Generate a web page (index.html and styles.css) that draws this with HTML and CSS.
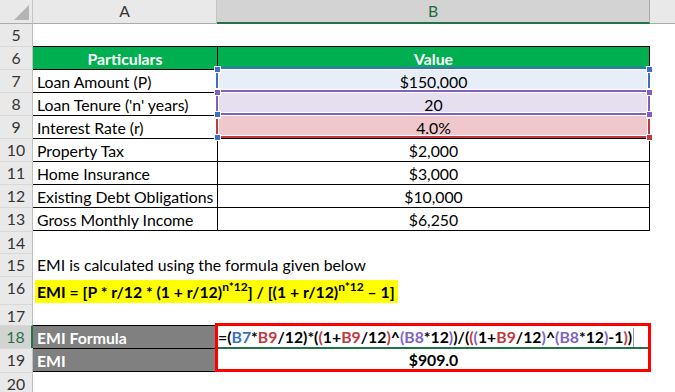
FILE: index.html
```html
<!DOCTYPE html>
<html>
<head>
<meta charset="utf-8">
<link rel="stylesheet" href="styles.css">
</head>
<body>
<div class="sheet">
  <div class="row hdr">
    <div class="corner"><span class="tri"></span></div>
    <div class="ch">A</div>
    <div class="ch sel">B</div>
    <div class="ch rest"></div>
  </div>
  <div class="row"><div class="rh">5</div><div class="c"></div><div class="c"></div><div class="c"></div></div>
  <div class="row"><div class="rh">6</div><div class="c ta th">Particulars</div><div class="c tb th ctr">Value</div><div class="c"></div></div>
  <div class="row"><div class="rh">7</div><div class="c ta">Loan Amount (P)</div><div class="c tb ctr fill-blue"><span class="range blue"><i class="h tl"></i><i class="h tr"></i><i class="h bl"></i><i class="h br"></i></span>$150,000</div><div class="c"></div></div>
  <div class="row"><div class="rh">8</div><div class="c ta">Loan Tenure ('n' years)</div><div class="c tb ctr fill-purple"><span class="range purple"><i class="h tl"></i><i class="h tr"></i><i class="h bl"></i><i class="h br"></i></span>20</div><div class="c"></div></div>
  <div class="row"><div class="rh">9</div><div class="c ta">Interest Rate (r)</div><div class="c tb ctr fill-red"><span class="range red"><i class="h tl"></i><i class="h tr"></i><i class="h bl"></i><i class="h br"></i></span>4.0%</div><div class="c"></div></div>
  <div class="row"><div class="rh">10</div><div class="c ta">Property Tax</div><div class="c tb ctr">$2,000</div><div class="c"></div></div>
  <div class="row"><div class="rh">11</div><div class="c ta">Home Insurance</div><div class="c tb ctr">$3,000</div><div class="c"></div></div>
  <div class="row"><div class="rh">12</div><div class="c ta">Existing Debt Obligations</div><div class="c tb ctr">$10,000</div><div class="c"></div></div>
  <div class="row last"><div class="rh">13</div><div class="c ta tl-last">Gross Monthly Income</div><div class="c tb tl-last ctr">$6,250</div><div class="c"></div></div>
  <div class="row r14"><div class="rh">14</div><div class="c"></div><div class="c"></div><div class="c"></div></div>
  <div class="row"><div class="rh">15</div><div class="c over">EMI is calculated using the formula given below</div><div class="c"></div><div class="c"></div></div>
  <div class="row r16"><div class="rh">16</div><div class="c over"><span class="hl">EMI = [P * r/12 * (1 + r/12)<sup>n*12</sup>] / [(1 + r/12)<sup>n*12</sup> – 1]</span></div><div class="c"></div><div class="c"></div></div>
  <div class="row r17"><div class="rh">17</div><div class="c"></div><div class="c"></div><div class="c"></div></div>
  <div class="calc">
    <div class="row"><div class="rh act">18</div><div class="c g">EMI Formula</div><div class="c fx"><span class="k">=(</span><span class="bl">B7</span><span class="k">*</span><span class="rd">B9</span><span class="k">/12)*(</span><span class="rd">(</span><span class="k">1+</span><span class="rd">B9</span><span class="k">/12</span><span class="rd">)</span><span class="k">^</span><span class="pu">(B8</span><span class="k">*12</span><span class="pu">)</span><span class="k">)/(</span><span class="rd">(</span><span class="pu">(</span><span class="k">1+</span><span class="rd">B9</span><span class="k">/12</span><span class="pu">)</span><span class="k">^</span><span class="pu">(B8</span><span class="k">*12</span><span class="pu">)</span><span class="k">-1</span><span class="rd">)</span><span class="k">)</span><span class="caret"></span></div><div class="c"></div></div>
    <div class="row r19"><div class="rh">19</div><div class="c g g-last">EMI</div><div class="c ctr bold">$909.0</div><div class="c"></div></div>
    <span class="redbox"></span>
    <span class="active"></span>
  </div>
  <div class="row r20"><div class="rh">20</div><div class="c"></div><div class="c"></div><div class="c"></div></div>
</div>
</body>
</html>
```

FILE: styles.css
```css
* { box-sizing: border-box; }
body {
  margin: 0;
  width: 675px;
  height: 392px;
  overflow: hidden;
  background: #fff;
  font-family: Lato, "Liberation Sans", sans-serif;
  font-size: 15.8px;
  color: #000;
}
.sheet { width: 675px; }
.row {
  display: grid;
  grid-template-columns: 33px 184px 433px 25px;
  height: 23px;
}
.row.last { height: 24px; }
.row.r14 { height: 22px; }
.row.r16 { height: 28px; }
.row.r17 { height: 21px; }
.row.r19 { height: 24px; }
.row.r20 { height: 20px; }

/* headers */
.corner {
  position: relative;
  background: #e9e9e9;
  border-right: 1px solid #c4c4c4;
  border-bottom: 1px solid #ababab;
}
.tri {
  position: absolute;
  right: 3px;
  bottom: 3px;
  width: 0;
  height: 0;
  border-left: 15px solid transparent;
  border-bottom: 15px solid #b4b4b4;
}
.ch {
  background: #e9e9e9;
  border-right: 1px solid #c4c4c4;
  border-bottom: 1px solid #ababab;
  text-align: center;
  line-height: 22px;
  color: #333;
}
.ch.sel {
  background: #d3d3d3;
  color: #1f6b41;
  border-bottom: 2px solid #217346;
  border-right: 1px solid #ababab;
}
.ch.rest { border-right: 0; }
.rh {
  background: #e9e9e9;
  border-right: 1px solid #c0c0c0;
  border-top: 1px solid #d8d8d8;
  text-align: center;
  line-height: 21px;
  color: #333;
}
.rh.act {
  background: #d3d3d3;
  color: #217346;
  border-right: 2px solid #217346;
}

/* cells */
.c {
  position: relative;
  padding: 1px 4px 0;
  line-height: 21px;
  white-space: nowrap;
}
.ctr { text-align: center; }
.bold { font-weight: bold; }
.ta { border-top: 1px solid #000; }
.tb {
  border-top: 1px solid #000;
  border-left: 1px solid #000;
  border-right: 1px solid #000;
}
.tl-last { border-bottom: 1px solid #000; }
.th {
  background: #00b050;
  color: #fff;
  font-weight: bold;
}
.ta.th { text-align: center; }
.fill-blue { background: #e8eef8; }
.fill-purple { background: #e5dff0; }
.fill-red { background: #f0c7cb; }

.range {
  position: absolute;
  left: -2px;
  right: -1px;
  top: -3px;
  bottom: 0;
  border: 2px solid;
  box-shadow: inset 0 0 0 1px #fff;
  z-index: 1;
}
.range.blue { border-color: #3d6fc6; color: #3d6fc6; }
.range.red { border-color: #c0393f; color: #c0393f; z-index: 2; }
.range.purple { border-color: #7f5fbf; color: #7f5fbf; z-index: 3; }
.h {
  position: absolute;
  width: 5px;
  height: 5px;
  background: currentColor;
  box-shadow: 0 0 0 1px #fff;
}
.h.tl { left: -3px; top: -2px; }
.h.tr { right: -4px; top: -2px; }
.h.bl { left: -3px; bottom: -4px; }
.h.br { right: -4px; bottom: -4px; }

.over { overflow: visible; }
.r16 .c { padding: 4px 0 0 2px; }
.hl {
  display: inline-block;
  background: #ffff00;
  height: 23px;
  line-height: 23px;
  padding: 0 3px 0 2px;
  font-weight: bold;
}
.hl sup {
  font-size: 12px;
  line-height: 0;
  vertical-align: 7px;
}

.calc { position: relative; }
.g {
  background: #808080;
  color: #fff;
  font-weight: bold;
  border-top: 1px solid #000;
}
.g-last { border-bottom: 1px solid #000; }
.fx {
  font-weight: bold;
  padding-left: 1px;
}
.k { color: #000; }
.bl { color: #3d6fc6; }
.rd { color: #c0393f; }
.pu { color: #8064c4; }
.caret {
  display: inline-block;
  width: 1px;
  height: 20px;
  background: #9a9a9a;
  vertical-align: -5px;
  margin-left: 1px;
}
.redbox {
  position: absolute;
  left: 215px;
  top: -2px;
  width: 436px;
  height: 49px;
  border: 3px solid #ff0000;
  z-index: 4;
}
.active {
  position: absolute;
  left: 218px;
  top: 22px;
  width: 432px;
  height: 2px;
  background: #217346;
  z-index: 3;
}
```
